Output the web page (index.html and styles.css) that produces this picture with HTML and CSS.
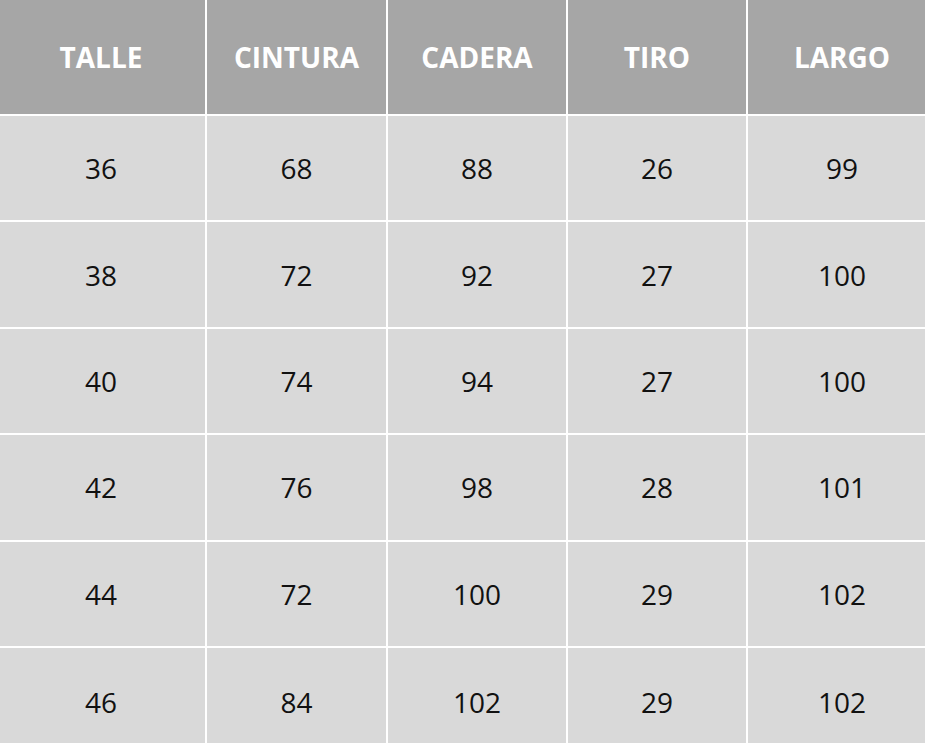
FILE: index.html
```html
<!DOCTYPE html>
<html lang="es">
<head>
<meta charset="utf-8">
<title>Tabla de talles</title>
<link rel="stylesheet" href="styles.css">
</head>
<body>
<div class="sizes">
  <div class="cell head">TALLE</div>
  <div class="cell head">CINTURA</div>
  <div class="cell head">CADERA</div>
  <div class="cell head">TIRO</div>
  <div class="cell head">LARGO</div>

  <div class="cell">36</div><div class="cell">68</div><div class="cell">88</div><div class="cell">26</div><div class="cell">99</div>
  <div class="cell">38</div><div class="cell">72</div><div class="cell">92</div><div class="cell">27</div><div class="cell">100</div>
  <div class="cell">40</div><div class="cell">74</div><div class="cell">94</div><div class="cell">27</div><div class="cell">100</div>
  <div class="cell">42</div><div class="cell">76</div><div class="cell">98</div><div class="cell">28</div><div class="cell">101</div>
  <div class="cell">44</div><div class="cell">72</div><div class="cell">100</div><div class="cell">29</div><div class="cell">102</div>
  <div class="cell">46</div><div class="cell">84</div><div class="cell">102</div><div class="cell">29</div><div class="cell">102</div>
</div>
</body>
</html>
```

FILE: styles.css
```css
html, body {
  margin: 0;
  padding: 0;
  background: #ffffff;
  overflow: hidden;
}

.sizes {
  display: grid;
  grid-template-columns: 208px 179px 178px 178px 188px;
  grid-template-rows: 114px repeat(5, 104.4px) 108px;
  gap: 2px;
  width: max-content;
  margin-left: -3px;
  background: #ffffff;
  font-family: "Open Sans", "Liberation Sans", sans-serif;
}

.cell {
  display: flex;
  align-items: center;
  justify-content: center;
  background: #d9d9d9;
  color: #111111;
  font-size: 28px;
  font-weight: 400;
}

.head {
  background: #a6a6a6;
  color: #ffffff;
  font-weight: 700;
  font-size: 28px;
}
```
